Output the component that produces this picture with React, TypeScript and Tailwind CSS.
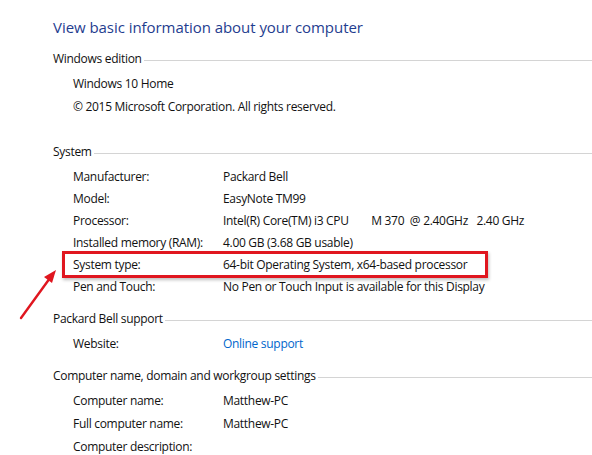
import React from 'react';

type Row = { label: string; value?: string; link?: boolean; highlight?: boolean };

function Header({ title, className }: { title: string; className: string }) {
  return (
    <div className={`flex h-[16px] items-center ${className}`}>
      <span className="whitespace-nowrap leading-[16px]">{title}</span>
      <div className="ml-[2px] mt-[2px] h-px flex-1 bg-[#d4d4d4]" />
    </div>
  );
}

function InfoRow({ row, h }: { row: Row; h: string }) {
  return (
    <div className={`relative flex pl-[20px] ${h}`}>
      <span className="w-[150px] shrink-0 whitespace-nowrap">{row.label}</span>
      <span className={`whitespace-pre ${row.link ? 'text-[#0066cc]' : ''}`}>{row.value}</span>
      {row.highlight && (
        <div className="absolute left-[9px] top-[-3px] h-[27px] w-[426px] border-[3px] border-[#e0161f] shadow-[1px_2px_3px_rgba(0,0,0,0.25)]" />
      )}
    </div>
  );
}

const systemRows: Row[] = [
  { label: 'Manufacturer:', value: 'Packard Bell' },
  { label: 'Model:', value: 'EasyNote TM99' },
  { label: 'Processor:', value: 'Intel(R) Core(TM) i3 CPU        M 370  @ 2.40GHz   2.40 GHz' },
  { label: 'Installed memory (RAM):', value: '4.00 GB (3.68 GB usable)' },
  { label: 'System type:', value: '64-bit Operating System, x64-based processor', highlight: true },
  { label: 'Pen and Touch:', value: 'No Pen or Touch Input is available for this Display' },
];

const nameRows: Row[] = [
  { label: 'Computer name:', value: 'Matthew-PC' },
  { label: 'Full computer name:', value: 'Matthew-PC' },
  { label: 'Computer description:', value: '' },
];

export default function App() {
  return (
    <div className="relative h-[455px] w-[592px] overflow-hidden bg-white pl-[53px] text-[12px] tracking-[-0.3px] text-[#111] [font-family:'Open_Sans',sans-serif]">
      <div className="mt-[17px] h-[20px] whitespace-nowrap text-[15px] leading-[20px] tracking-[-0.05px] text-[#1f3d8f]">
        View basic information about your computer
      </div>

      <Header title="Windows edition" className="mt-[14px]" />
      <div className="mt-[5px]">
        <div className="h-[23px] pl-[20px] leading-[23px]">Windows 10 Home</div>
        <div className="h-[23px] pl-[20px] leading-[23px]">© 2015 Microsoft Corporation. All rights reserved.</div>
      </div>

      <Header title="System" className="mt-[26px]" />
      <div className="mt-[6px]">
        {systemRows.map((r) => (
          <InfoRow key={r.label} row={r} h="h-[22px] leading-[22px]" />
        ))}
      </div>

      <Header title="Packard Bell support" className="mt-[13px]" />
      <div className="mt-[6px]">
        <InfoRow row={{ label: 'Website:', value: 'Online support', link: true }} h="h-[22px] leading-[22px]" />
      </div>

      <Header title="Computer name, domain and workgroup settings" className="mt-[13px]" />
      <div className="mt-[5px]">
        {nameRows.map((r) => (
          <InfoRow key={r.label} row={r} h="h-[23px] leading-[23px]" />
        ))}
      </div>

      {/* annotation arrow */}
      <svg className="pointer-events-none absolute left-0 top-0" width="592" height="455">
        <line x1="21" y1="318" x2="50" y2="278" stroke="#e0161f" strokeWidth="2.4" strokeLinecap="round" />
        <polygon points="56,270 44,277 52,283" fill="#e0161f" />
      </svg>
    </div>
  );
}
